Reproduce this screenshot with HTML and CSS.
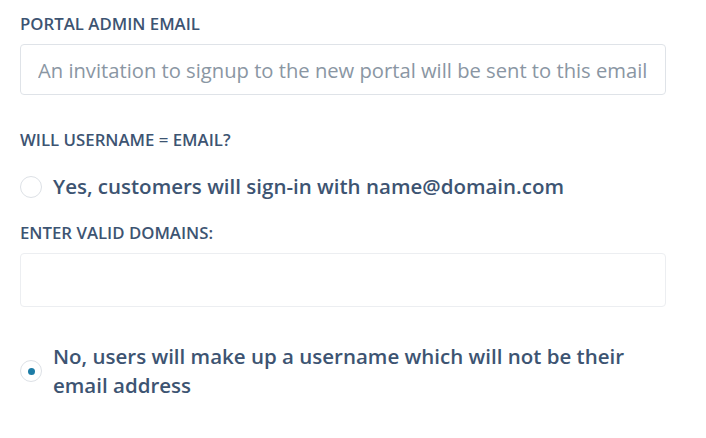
FILE: index.html
```html
<!DOCTYPE html>
<html lang="en">
<head>
    <meta charset="UTF-8">
    <meta name="viewport" content="width=device-width, initial-scale=1.0">
    <title>Portal Admin</title>
    <link rel="stylesheet" href="styles.css">
</head>
<body>

<form class="portal-form">
    <label class="field-label" for="admin-email">Portal Admin Email</label>
    <input type="text" class="text-input" id="admin-email" placeholder="An invitation to signup to the new portal will be sent to this email" />

    <div class="field-label question">Will username = email?</div>

    <label class="radio-option yes">
        <input type="radio" name="username" value="email" />
        <span class="radio-mark"></span>
        <span class="radio-text">Yes, customers will sign-in with name@domain.com</span>
    </label>

    <label class="field-label domains" for="domains">Enter valid domains:</label>
    <input type="text" class="text-input light" id="domains" />

    <label class="radio-option no">
        <input type="radio" name="username" value="custom" checked />
        <span class="radio-mark"></span>
        <span class="radio-text">No, users will make up a username which will not be their email address</span>
    </label>
</form>

</body>
</html>
```

FILE: styles.css
```css
body {
    font-family: 'Open Sans', 'Noto Sans', sans-serif;
    background: #ffffff;
    color: #3d5472;
    margin: 0;
}

.portal-form {
    display: flex;
    flex-direction: column;
    align-items: flex-start;
    padding: 14px 0 0 20px;
}

.field-label {
    display: block;
    font-size: 16.8px;
    line-height: 20px;
    font-weight: 600;
    text-transform: uppercase;
    color: #3d5472;
    margin-bottom: 10px;
}

.field-label.question {
    margin-top: 35px;
    margin-bottom: 22px;
}

.field-label.domains {
    margin-top: 22px;
    margin-bottom: 10px;
}

.text-input {
    box-sizing: border-box;
    width: 646px;
    height: 51px;
    padding: 0 17px;
    font-family: inherit;
    font-size: 20.2px;
    color: #3d5472;
    border: 1px solid #dfe3e8;
    border-radius: 4px;
    outline: none;
    background: #ffffff;
}

.text-input::placeholder {
    color: #8a96a3;
}

.text-input.light {
    height: 54px;
    border-color: #eceef1;
}

.radio-option {
    display: flex;
    align-items: center;
    gap: 11px;
    font-size: 20.5px;
    line-height: 29px;
    font-weight: 600;
    color: #3d5472;
    cursor: pointer;
}

.radio-option.no {
    margin-top: 35px;
    max-width: 640px;
}

.radio-option input {
    display: none;
}

.radio-mark {
    flex: none;
    box-sizing: border-box;
    width: 22px;
    height: 22px;
    border: 1px solid #dde1e6;
    border-radius: 50%;
    display: flex;
    align-items: center;
    justify-content: center;
}

.radio-option input:checked + .radio-mark::after {
    content: '';
    width: 7px;
    height: 7px;
    border-radius: 50%;
    background: #1d7ca6;
}
```
